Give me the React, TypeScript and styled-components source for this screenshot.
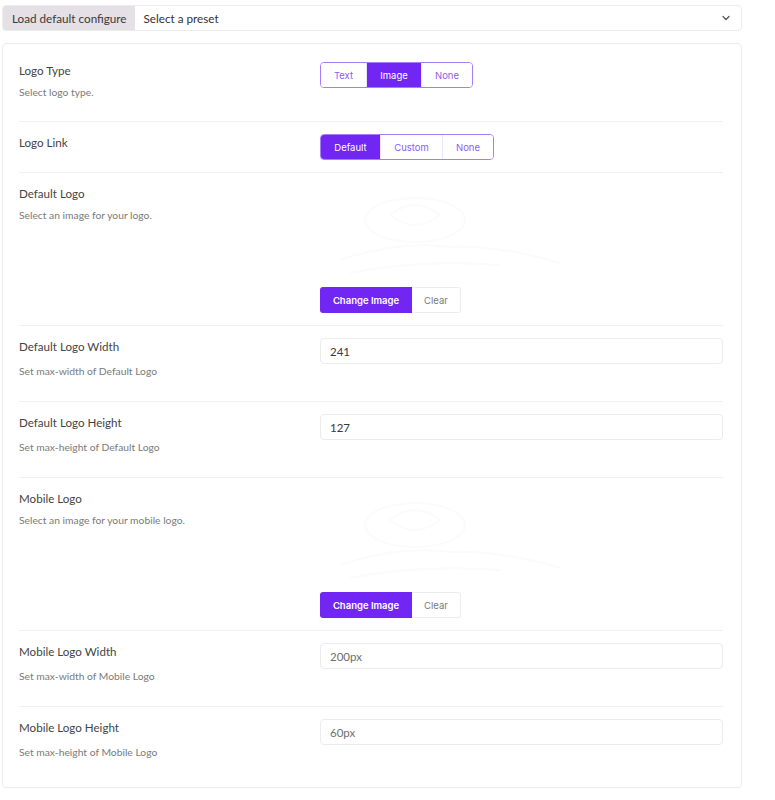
import { FC } from "react";
import styled, { createGlobalStyle } from "styled-components";

const PURPLE = "#7126f4";
const BORDER = "#ececec";
const TEXT_FONT = `Lato, "Open Sans", Arial, sans-serif`;
const BUTTON_FONT = `Inter, "Noto Sans", sans-serif`;

const GlobalStyle = createGlobalStyle`
    body {
        margin: 0;
        background: #ffffff;
        font-family: ${TEXT_FONT};
        color: #444444;
    }
`;

const Page = styled.div`
    width: 740px;
    padding: 5px 0 12px 2px;
    display: flex;
    flex-direction: column;
    gap: 12px;
`;

const PresetBar = styled.div`
    height: 26px;
    display: flex;
    border: 1px solid ${BORDER};
    border-radius: 4px;
    overflow: hidden;
    box-sizing: border-box;
`;

const PresetLabel = styled.div`
    background: #e4e0e5;
    padding: 0 8px 0 9px;
    display: flex;
    align-items: center;
    font-size: 11.7px;
    color: #3a3a3a;
`;

const PresetSelect = styled.div`
    flex: 1;
    display: flex;
    align-items: center;
    justify-content: space-between;
    padding: 0 10px 0 9px;
    font-size: 11.7px;
    color: #333;
`;

const Card = styled.div`
    border: 1px solid ${BORDER};
    border-radius: 4px;
    padding: 6px 18px 5px 16px;
`;

const Row = styled.div`
    display: grid;
    grid-template-columns: 301px 1fr;
    padding: 12px 0;
    border-bottom: 1px solid #f0f0f0;

    &:last-child {
        border-bottom: none;
    }
`;

const Info = styled.div`
    display: flex;
    flex-direction: column;
`;

const Title = styled.div`
    font-size: 11.6px;
    line-height: 18px;
    color: #444444;
`;

const Desc = styled.div<{ $gap: number; $after: number }>`
    font-size: 10.3px;
    line-height: 16px;
    color: #7a7a7a;
    margin-top: ${(p) => p.$gap}px;
    margin-bottom: ${(p) => p.$after}px;
`;

const Control = styled.div`
    display: flex;
    flex-direction: column;
    align-items: flex-start;
    gap: 7px;
`;

const Segmented = styled.div`
    display: flex;
    height: 26px;
    border: 1px solid #a77cf8;
    border-radius: 4px;
    overflow: hidden;
    box-sizing: border-box;
`;

const SegButton = styled.button<{ $active?: boolean; $width: number }>`
    width: ${(p) => p.$width}px;
    border: none;
    border-left: 1px solid #ece3fd;
    background: ${(p) => (p.$active ? PURPLE : "#ffffff")};
    color: ${(p) => (p.$active ? "#ffffff" : "#8c5cf5")};
    font-family: ${BUTTON_FONT};
    font-size: 9.5px;
    padding: 0;
    cursor: pointer;

    &:first-child {
        border-left: none;
    }
`;

const ImageBox = styled.div`
    width: 260px;
    height: 95px;
    display: flex;
    align-items: center;
`;

const ButtonGroup = styled.div`
    display: flex;
    height: 26px;
`;

const PrimaryButton = styled.button`
    width: 92px;
    border: none;
    border-radius: 3px 0 0 3px;
    background: ${PURPLE};
    color: #ffffff;
    font-family: ${BUTTON_FONT};
    font-size: 9.5px;
    font-weight: 600;
    cursor: pointer;
`;

const GhostButton = styled.button`
    width: 49px;
    border: 1px solid ${BORDER};
    border-left: none;
    border-radius: 0 3px 3px 0;
    background: #ffffff;
    color: #7a7a7a;
    font-family: ${BUTTON_FONT};
    font-size: 9.5px;
    cursor: pointer;
`;

const Input = styled.input<{ $muted?: boolean }>`
    width: 100%;
    height: 26px;
    box-sizing: border-box;
    border: 1px solid ${BORDER};
    border-radius: 4px;
    padding: 0 9px;
    font-family: ${TEXT_FONT};
    font-size: 11.5px;
    color: ${(p) => (p.$muted ? "#6f6f6f" : "#3a3a3a")};
    outline: none;
`;

const Chevron: FC = () => (
    <svg width="10" height="10" viewBox="0 0 10 10" fill="none">
        <path d="M2 3.5 L5 6.5 L8 3.5" stroke="#555" strokeWidth="1.2" strokeLinecap="round" strokeLinejoin="round" />
    </svg>
);

// the logo is white on white, barely visible
const FaintLogo: FC = () => (
    <svg width="260" height="95" viewBox="0 0 260 95" fill="none">
        <g stroke="#fbfbfb" strokeWidth="2" fill="none">
            <ellipse cx="95" cy="35" rx="50" ry="22" />
            <path d="M70 30 Q95 10 120 30 Q95 50 70 30" />
            <path d="M20 75 Q80 55 130 62 Q180 60 240 78" />
            <path d="M30 88 Q100 74 180 80" />
        </g>
    </svg>
);

type SegOption = { label: string; width: number; active?: boolean };

const SegmentedControl: FC<{ options: SegOption[] }> = ({ options }) => (
    <Segmented>
        {options.map((o) => (
            <SegButton key={o.label} $active={o.active} $width={o.width}>
                {o.label}
            </SegButton>
        ))}
    </Segmented>
);

type InfoProps = { title: string; desc?: string; roomy?: boolean };

const FieldInfo: FC<InfoProps> = ({ title, desc, roomy }) => (
    <Info>
        <Title>{title}</Title>
        {desc && (
            <Desc $gap={roomy ? 7 : 4} $after={roomy ? 10 : 9}>
                {desc}
            </Desc>
        )}
    </Info>
);

const ImagePicker: FC = () => (
    <Control>
        <ImageBox>
            <FaintLogo />
        </ImageBox>
        <ButtonGroup>
            <PrimaryButton>Change Image</PrimaryButton>
            <GhostButton>Clear</GhostButton>
        </ButtonGroup>
    </Control>
);

export default function App() {
    return (
        <>
            <GlobalStyle />
            <Page>
                <PresetBar>
                    <PresetLabel>Load default configure</PresetLabel>
                    <PresetSelect>
                        <span>Select a preset</span>
                        <Chevron />
                    </PresetSelect>
                </PresetBar>

                <Card>
                    <Row>
                        <FieldInfo title="Logo Type" desc="Select logo type." />
                        <Control>
                            <SegmentedControl
                                options={[
                                    { label: "Text", width: 45 },
                                    { label: "Image", width: 55, active: true },
                                    { label: "None", width: 51 },
                                ]}
                            />
                        </Control>
                    </Row>

                    <Row>
                        <FieldInfo title="Logo Link" />
                        <Control>
                            <SegmentedControl
                                options={[
                                    { label: "Default", width: 59, active: true },
                                    { label: "Custom", width: 62 },
                                    { label: "None", width: 51 },
                                ]}
                            />
                        </Control>
                    </Row>

                    <Row>
                        <FieldInfo title="Default Logo" desc="Select an image for your logo." />
                        <ImagePicker />
                    </Row>

                    <Row>
                        <FieldInfo title="Default Logo Width" desc="Set max-width of Default Logo" roomy />
                        <Input defaultValue="241" />
                    </Row>

                    <Row>
                        <FieldInfo title="Default Logo Height" desc="Set max-height of Default Logo" roomy />
                        <Input defaultValue="127" />
                    </Row>

                    <Row>
                        <FieldInfo title="Mobile Logo" desc="Select an image for your mobile logo." />
                        <ImagePicker />
                    </Row>

                    <Row>
                        <FieldInfo title="Mobile Logo Width" desc="Set max-width of Mobile Logo" roomy />
                        <Input defaultValue="200px" $muted />
                    </Row>

                    <Row>
                        <FieldInfo title="Mobile Logo Height" desc="Set max-height of Mobile Logo" roomy />
                        <Input defaultValue="60px" $muted />
                    </Row>
                </Card>
            </Page>
        </>
    );
}
